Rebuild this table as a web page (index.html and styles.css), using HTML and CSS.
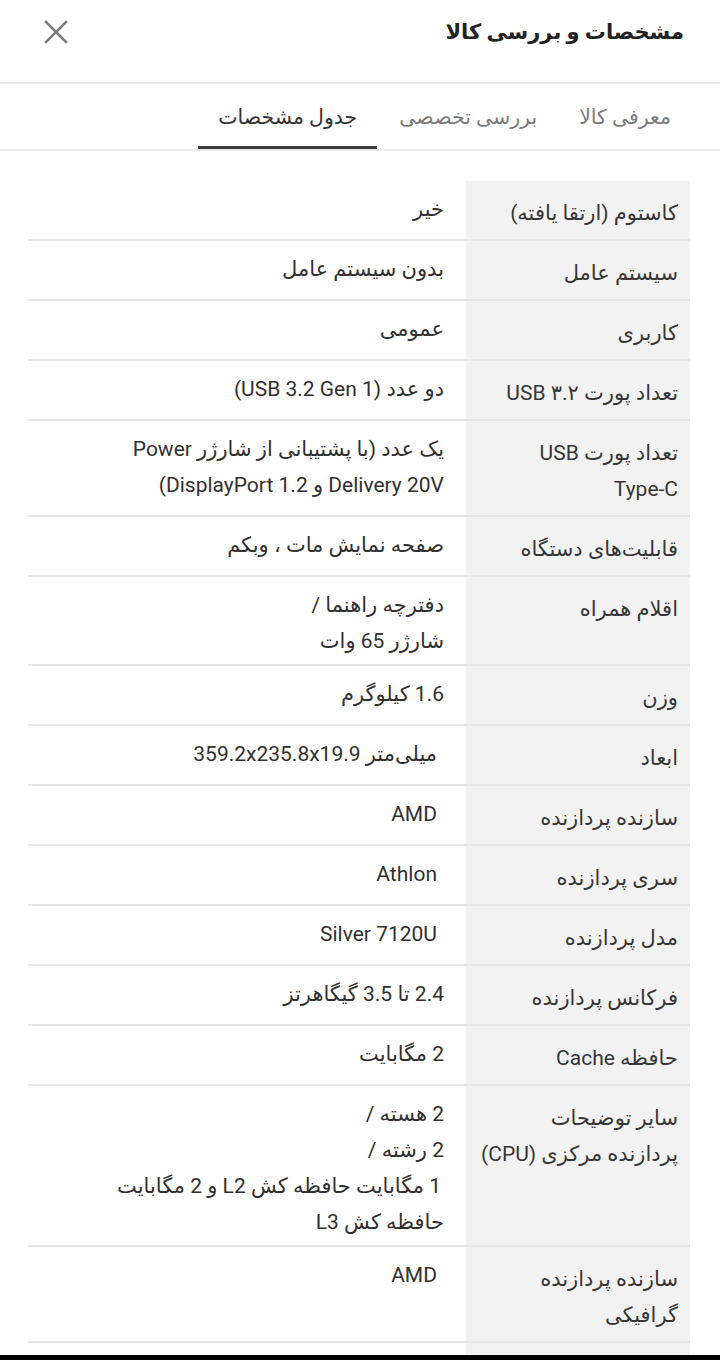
FILE: index.html
```html
<!DOCTYPE html>
<html lang="fa" dir="rtl">
<head>
<meta charset="utf-8">
<title>مشخصات و بررسی کالا</title>
<link rel="stylesheet" href="styles.css">
</head>
<body>
<div class="sheet">
  <header class="top">
    <h1 class="title">مشخصات و بررسی کالا</h1>
    <button class="close" aria-label="بستن">
      <svg width="24" height="24" viewBox="0 0 24 24"><path d="M2 2L22 22M22 2L2 22" stroke="#7d7d7d" stroke-width="2.6" stroke-linecap="square" fill="none"/></svg>
    </button>
  </header>
  <nav class="tabs">
    <span class="tab">معرفی کالا</span>
    <span class="tab">بررسی تخصصی</span>
    <span class="tab active">جدول مشخصات</span>
  </nav>
  <div class="specs">
    <div class="row"><div class="key">کاستوم (ارتقا یافته)</div><div class="val">خیر</div></div>
    <div class="row"><div class="key">سیستم عامل</div><div class="val">بدون سیستم عامل</div></div>
    <div class="row"><div class="key">کاربری</div><div class="val">عمومی</div></div>
    <div class="row"><div class="key">تعداد پورت USB ۳.۲</div><div class="val">دو عدد (USB 3.2 Gen 1)</div></div>
    <div class="row"><div class="key">تعداد پورت USB<br>Type-C</div><div class="val">یک عدد (با پشتیبانی از شارژر Power<br>Delivery 20V و DisplayPort 1.2)</div></div>
    <div class="row"><div class="key">قابلیت‌های دستگاه</div><div class="val">صفحه نمایش مات ، وبکم</div></div>
    <div class="row"><div class="key">اقلام همراه</div><div class="val">دفترچه راهنما /<br>شارژر 65 وات</div></div>
    <div class="row"><div class="key">وزن</div><div class="val">1.6 کیلوگرم</div></div>
    <div class="row"><div class="key">ابعاد</div><div class="val ind">میلی‌متر 359.2x235.8x19.9</div></div>
    <div class="row"><div class="key">سازنده پردازنده</div><div class="val ind">AMD</div></div>
    <div class="row"><div class="key">سری پردازنده</div><div class="val ind">Athlon</div></div>
    <div class="row"><div class="key">مدل پردازنده</div><div class="val ind">Silver 7120U</div></div>
    <div class="row"><div class="key">فرکانس پردازنده</div><div class="val">2.4 تا 3.5 گیگاهرتز</div></div>
    <div class="row"><div class="key">حافظه Cache</div><div class="val">2 مگابایت</div></div>
    <div class="row"><div class="key">سایر توضیحات<br>پردازنده مرکزی (CPU)</div><div class="val">2 هسته /<br>2 رشته /<br><span class="ind-in">1 مگابایت حافظه کش L2 و 2 مگابایت</span><br>حافظه کش L3</div></div>
    <div class="row"><div class="key">سازنده پردازنده<br>گرافیکی</div><div class="val ind">AMD</div></div>
    <div class="row"><div class="key">&nbsp;</div><div class="val">&nbsp;</div></div>
  </div>
</div>
<div class="navbar"></div>
</body>
</html>
```
FILE: styles.css
```css
html, body {
  margin: 0;
  padding: 0;
  background: #ffffff;
  height: 1360px;
  overflow: hidden;
}
body {
  font-family: Roboto, "DejaVu Sans", sans-serif;
  color: #333333;
  direction: rtl;
}
.sheet {
  width: 720px;
}
.top {
  display: flex;
  align-items: flex-start;
  justify-content: space-between;
  height: 84px;
  box-sizing: border-box;
  padding: 14px 36px 0 44px;
  border-bottom: 2px solid #e4e4e4;
}
.title {
  margin: 0;
  font-size: 21px;
  line-height: 36px;
  font-weight: 700;
  color: #222222;
}
.close {
  border: 0;
  background: none;
  padding: 0;
  width: 24px;
  height: 24px;
  display: flex;
  margin-top: 6px;
}
.tabs {
  display: flex;
  height: 65px;
  padding-right: 29px;
  border-bottom: 2px solid #ebebeb;
}
.tab {
  display: flex;
  align-items: center;
  padding: 0 20px;
  margin-left: 2px;
  font-size: 20.5px;
  color: #7b7b7b;
}
.tab.active {
  color: #333333;
  box-shadow: inset 0 -3px 0 #3c3c3c;
}
.specs {
  margin: 30px 30px 0 28px;
}
.row {
  display: grid;
  grid-template-columns: 224px 1fr;
  border-bottom: 2px solid #e6e6e6;
}
.key {
  background: #f2f2f2;
  padding: 14px 12px 8px 0;
  font-size: 21px;
  line-height: 36px;
  color: #363636;
  white-space: nowrap;
}
.val {
  padding: 10px 22px 5px 20px;
  font-size: 21px;
  line-height: 36px;
  color: #303030;
}
.val.ind {
  padding-right: 29px;
}
.ind-in {
  padding-right: 3px;
}
.navbar {
  position: fixed;
  left: 0;
  right: 0;
  bottom: 0;
  height: 5px;
  background: #000000;
}
```
